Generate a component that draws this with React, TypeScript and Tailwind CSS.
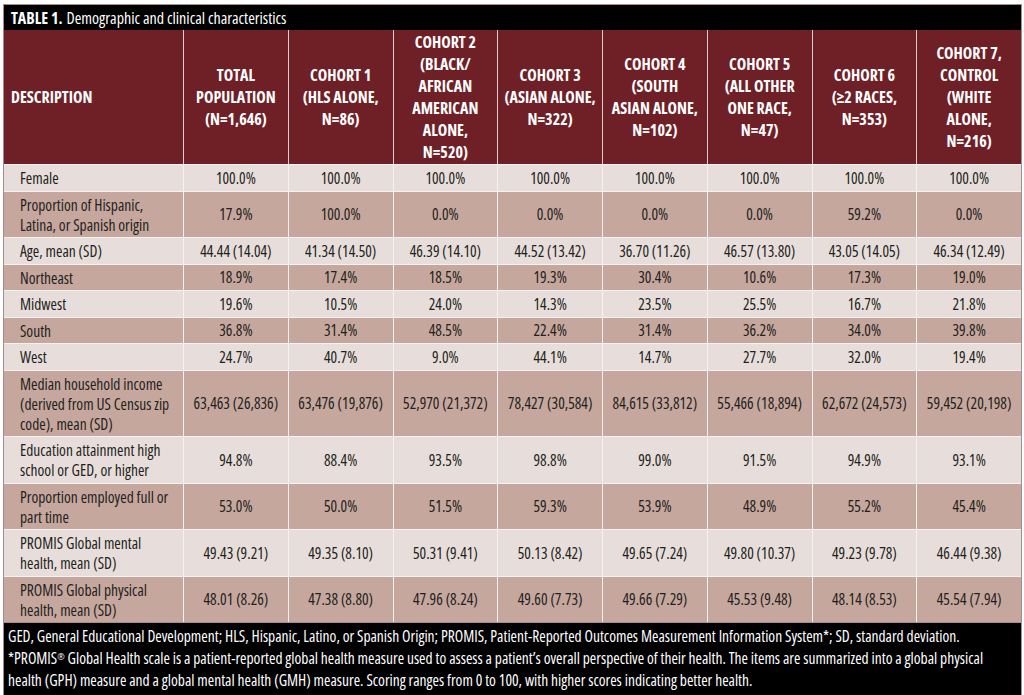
const headers: string[][] = [
  ["TOTAL", "POPULATION", "(N=1,646)"],
  ["COHORT 1", "(HLS ALONE,", "N=86)"],
  ["COHORT 2", "(BLACK/", "AFRICAN", "AMERICAN", "ALONE,", "N=520)"],
  ["COHORT 3", "(ASIAN ALONE,", "N=322)"],
  ["COHORT 4", "(SOUTH", "ASIAN ALONE,", "N=102)"],
  ["COHORT 5", "(ALL OTHER", "ONE RACE,", "N=47)"],
  ["COHORT 6", "(≥2 RACES,", "N=353)"],
  ["COHORT 7,", "CONTROL", "(WHITE", "ALONE,", "N=216)"],
];

const rows: { label: string[]; values: string[] }[] = [
  {
    label: ["Female"],
    values: ["100.0%", "100.0%", "100.0%", "100.0%", "100.0%", "100.0%", "100.0%", "100.0%"],
  },
  {
    label: ["Proportion of Hispanic,", "Latina, or Spanish origin"],
    values: ["17.9%", "100.0%", "0.0%", "0.0%", "0.0%", "0.0%", "59.2%", "0.0%"],
  },
  {
    label: ["Age, mean (SD)"],
    values: ["44.44 (14.04)", "41.34 (14.50)", "46.39 (14.10)", "44.52 (13.42)", "36.70 (11.26)", "46.57 (13.80)", "43.05 (14.05)", "46.34 (12.49)"],
  },
  {
    label: ["Northeast"],
    values: ["18.9%", "17.4%", "18.5%", "19.3%", "30.4%", "10.6%", "17.3%", "19.0%"],
  },
  {
    label: ["Midwest"],
    values: ["19.6%", "10.5%", "24.0%", "14.3%", "23.5%", "25.5%", "16.7%", "21.8%"],
  },
  {
    label: ["South"],
    values: ["36.8%", "31.4%", "48.5%", "22.4%", "31.4%", "36.2%", "34.0%", "39.8%"],
  },
  {
    label: ["West"],
    values: ["24.7%", "40.7%", "9.0%", "44.1%", "14.7%", "27.7%", "32.0%", "19.4%"],
  },
  {
    label: ["Median household income", "(derived from US Census zip", "code), mean (SD)"],
    values: ["63,463 (26,836)", "63,476 (19,876)", "52,970 (21,372)", "78,427 (30,584)", "84,615 (33,812)", "55,466 (18,894)", "62,672 (24,573)", "59,452 (20,198)"],
  },
  {
    label: ["Education attainment high", "school or GED, or higher"],
    values: ["94.8%", "88.4%", "93.5%", "98.8%", "99.0%", "91.5%", "94.9%", "93.1%"],
  },
  {
    label: ["Proportion employed full or", "part time"],
    values: ["53.0%", "50.0%", "51.5%", "59.3%", "53.9%", "48.9%", "55.2%", "45.4%"],
  },
  {
    label: ["PROMIS Global mental", "health, mean (SD)"],
    values: ["49.43 (9.21)", "49.35 (8.10)", "50.31 (9.41)", "50.13 (8.42)", "49.65 (7.24)", "49.80 (10.37)", "49.23 (9.78)", "46.44 (9.38)"],
  },
  {
    label: ["PROMIS Global physical", "health, mean (SD)"],
    values: ["48.01 (8.26)", "47.38 (8.80)", "47.96 (8.24)", "49.60 (7.73)", "49.66 (7.29)", "45.53 (9.48)", "48.14 (8.53)", "45.54 (7.94)"],
  },
];

export default function App() {
  return (
    <div className="w-[1024px] h-[695px] bg-white pl-[3px] pt-[4px] font-['Open_Sans',sans-serif] font-stretch-condensed">
      <div className="w-[1019px] border border-[#a98c89] bg-black">
        {/* title */}
        <div className="h-[25px] pl-[7px] flex items-center text-[16px] text-white">
          <span className="font-bold">TABLE 1.</span>
          <span className="ml-[4px]">Demographic and clinical characteristics</span>
        </div>

        {/* header */}
        <div className="grid grid-cols-[179px_repeat(8,1fr)] h-[134px] bg-[#6f2027] text-white font-bold text-[16px] leading-[22px]">
          <div className="flex items-center pl-[7px]">DESCRIPTION</div>
          {headers.map((h, i) => (
            <div key={i} className="flex flex-col items-center justify-center text-center border-l border-[#d8cccc]">
              {h.map((line, j) => (
                <span key={j}>{line}</span>
              ))}
            </div>
          ))}
        </div>

        {/* body */}
        {rows.map((row, i) => {
          const bg = i % 2 === 0 ? "bg-[#e7dedb]" : "bg-[#c6a79e]";
          return (
            <div
              key={i}
              className={`grid grid-cols-[179px_repeat(8,1fr)] border-t border-[#f6f2f1] text-[15.5px] leading-[20px] text-[#231f20] ${bg}`}
            >
              <div className="pl-[16px] pt-[3px] pb-[2.5px] whitespace-nowrap">
                {row.label.map((line, j) => (
                  <div key={j}>{line}</div>
                ))}
              </div>
              {row.values.map((v, j) => (
                <div key={j} className="flex items-center justify-center border-l border-[#f6f2f1] whitespace-nowrap">
                  {v}
                </div>
              ))}
            </div>
          );
        })}

        {/* footnote */}
        <div className="border-t border-[#a98c89] pl-[4px] pt-[2px] pb-[4px] text-[15.5px] leading-[22px] text-white whitespace-nowrap">
          <div>
            GED, General Educational Development; HLS, Hispanic, Latino, or Spanish Origin; PROMIS, Patient-Reported Outcomes Measurement Information System*; SD, standard deviation.
          </div>
          <div>
            *PROMIS<sup className="text-[9px]">®</sup> Global Health scale is a patient-reported global health measure used to assess a patient’s overall perspective of their health. The items are summarized into a global physical
          </div>
          <div>
            health (GPH) measure and a global mental health (GMH) measure. Scoring ranges from 0 to 100, with higher scores indicating better health.
          </div>
        </div>
      </div>
    </div>
  );
}
